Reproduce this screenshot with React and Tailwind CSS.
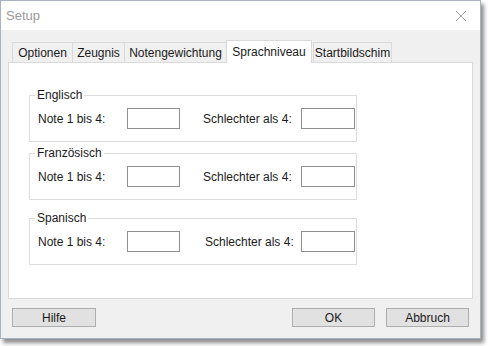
import React from 'react';

const font = { fontFamily: '"Liberation Sans", Arial, sans-serif' };

function Group({ title, className, rightLeft = 'ml-[23px] w-[98px]' }) {
  return (
    <fieldset className={`border border-[#dcdcdc] w-[328px] h-[53px] px-0 ${className}`}>
      <legend className="ml-[5px] px-[2px] leading-[12px] text-[12px] text-[#1a1a1a]">{title}</legend>
      <div className="flex items-center h-[35px] text-[12px] text-[#1a1a1a]">
        <span className="ml-[8px] w-[89px]">Note 1 bis 4:</span>
        <div className="w-[53px] h-[21px] border border-[#8f8f8f] bg-white" />
        <span className={rightLeft}>Schlechter als 4:</span>
        <div className="w-[54px] h-[21px] border border-[#8f8f8f] bg-white" />
      </div>
    </fieldset>
  );
}

function Tab({ label, w }) {
  return (
    <div
      className={`h-[20px] border border-[#d9d9d9] border-b-0 bg-[#f0f0f0] flex items-center justify-center text-[12px] text-[#1a1a1a] -mr-px ${w}`}
    >
      {label}
    </div>
  );
}

export default function App() {
  return (
    <div className="w-[488px] h-[346px] bg-white" style={font}>
      <div className="w-[481px] h-[339px] border border-[#a9b3bf] bg-[#f0f0f0] flex flex-col shadow-[3px_4px_4px_rgba(0,0,0,0.45)]">
        <div className="h-[29px] bg-white flex items-center justify-between px-[5px]">
          <span className="text-[13px] text-[#9a9a9a]">Setup</span>
          <svg width="12" height="12" viewBox="0 0 12 12" className="mr-[8px]">
            <path d="M1 1 L11 11 M11 1 L1 11" stroke="#a0a0a0" strokeWidth="1" />
          </svg>
        </div>

        <div className="flex items-end pl-[11px] mt-[9px] h-[23px]">
          <Tab label="Optionen" w="w-[61px]" />
          <Tab label="Zeugnis" w="w-[53px]" />
          <Tab label="Notengewichtung" w="w-[103px]" />
          <div className="h-[23px] w-[86px] bg-white border border-[#d9d9d9] border-b-0 flex items-center justify-center text-[12px] text-[#1a1a1a] relative z-10 -mb-px -mr-px">
            Sprachniveau
          </div>
          <div className="w-[2px]" />
          <Tab label="Startbildschim" w="w-[79px]" />
        </div>

        <div className="mx-[7px] h-[237px] bg-white border border-[#d9d9d9] pl-[20px] pt-[26px]">
          <Group title="Englisch" />
          <Group title="Französisch" className="mt-[5px]" />
          <Group title="Spanisch" className="mt-[12px]" rightLeft="ml-[25px] w-[96px]" />
        </div>

        <div className="flex items-center mt-[9px] px-[11px] text-[12px] text-[#1a1a1a]">
          <div className="w-[84px] h-[19px] border border-[#adadad] bg-[#e1e1e1] flex items-center justify-center">Hilfe</div>
          <div className="ml-auto w-[83px] h-[19px] border border-[#adadad] bg-[#e1e1e1] flex items-center justify-center">OK</div>
          <div className="ml-[11px] w-[83px] h-[19px] border border-[#adadad] bg-[#e1e1e1] flex items-center justify-center">Abbruch</div>
        </div>
      </div>
    </div>
  );
}
